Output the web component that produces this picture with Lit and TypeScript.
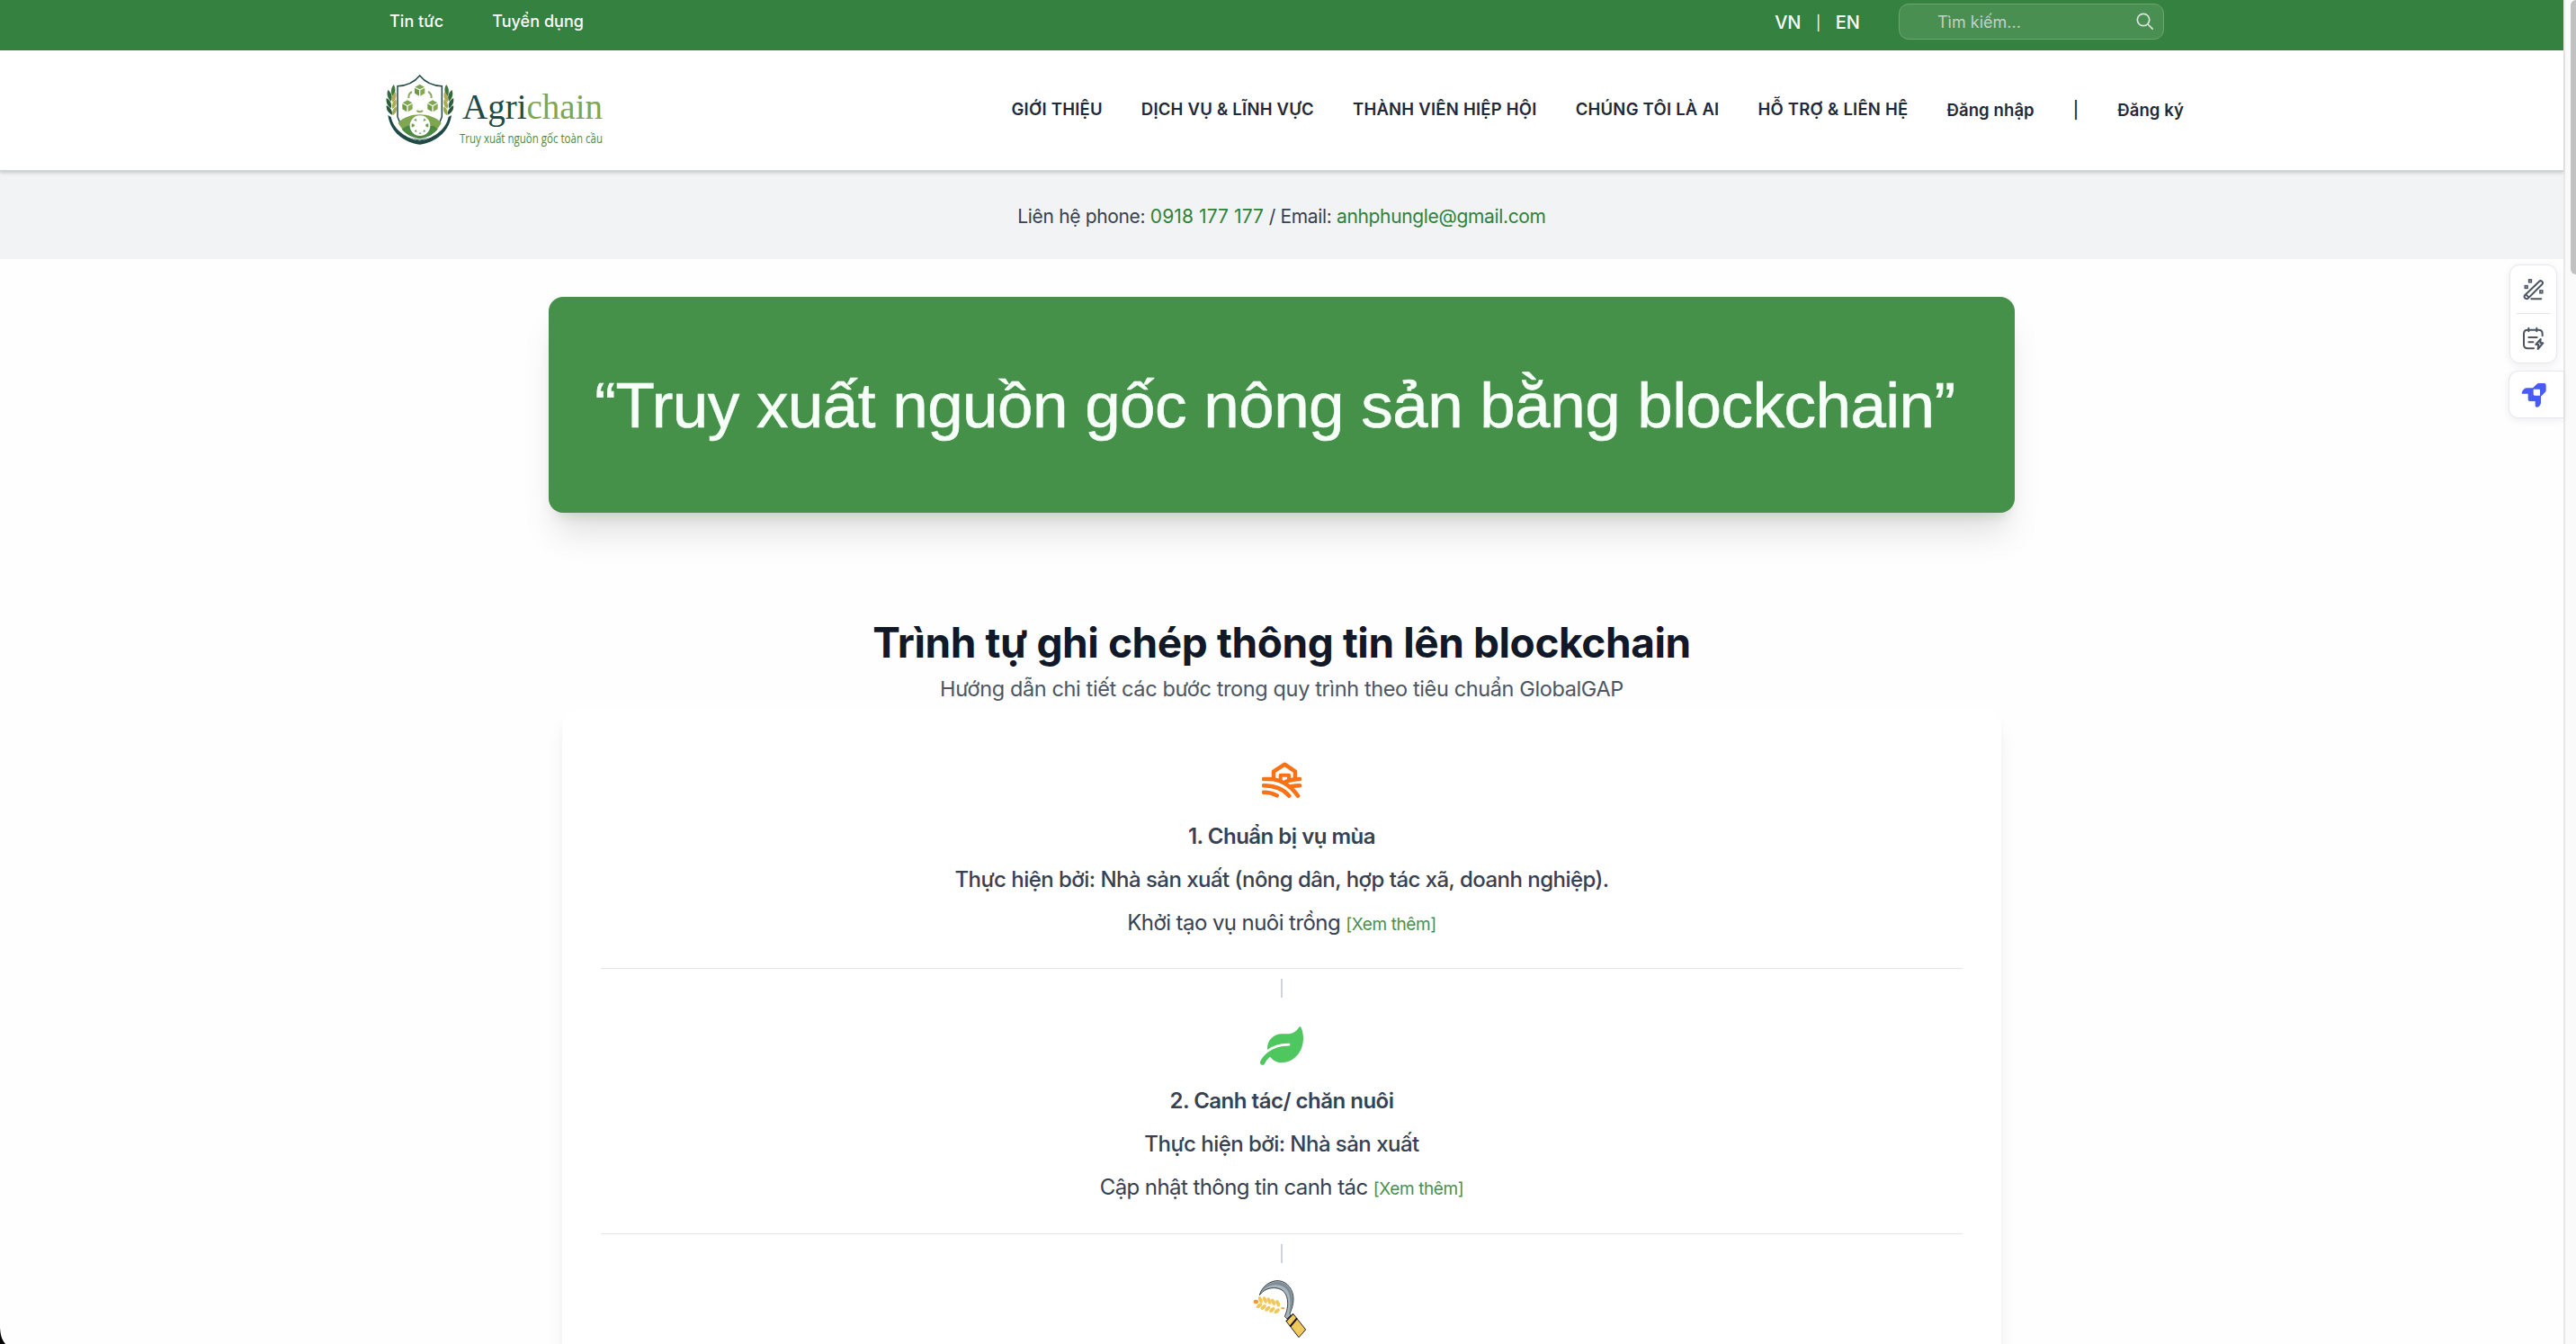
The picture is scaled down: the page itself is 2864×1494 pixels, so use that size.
import { LitElement, html, css, svg, nothing } from "lit";
import { customElement, property } from "lit/decorators.js";

const farmIcon = svg`<svg width="44" height="40" viewBox="189 82 132 120" fill="none" stroke="#f97316" stroke-width="13.5" stroke-linecap="round" stroke-linejoin="round">
  <path d="M228 137V114L265 90L300 114V137"/>
  <path d="M251 142V126H279V138" stroke-width="12"/>
  <path d="M195 139H212C256 139 286 163 309 195"/>
  <path d="M315 139C297 139 282 142 268 148"/>
  <path d="M195 161C238 161 262 174 280 195"/>
  <path d="M315 161C304 161 294 162 284 164"/>
  <path d="M195 183C213 183 227 187 239 194"/>
</svg>`;

const leafIcon = svg`<svg width="48" height="43" viewBox="0 0 576 512" fill="#4fc75f">
  <path d="M546.2 9.7c-5.6-12.5-21.6-13-28.3-1.2C486.9 62.4 431.4 96 368 96h-80C182 96 96 182 96 288c0 7 .8 13.7 1.5 20.5C161.3 262.8 253.4 224 384 224c8.800 0 16 7.200 16 16s-7.200 16-16 16C132.600 256 26 410.100 2.400 468c-6.600 16.300 1.200 34.900 17.500 41.600 16.400 6.800 35-1.100 41.800-17.300 1.500-3.600 20.900-47.900 71.900-90.600 32.400 43.900 94 85.800 174.900 77.200C465.500 467.500 576 326.700 576 154.300c0-50.200-10.800-102.200-29.800-144.600z"/>
</svg>`;

const grainPairs = [
  [185, 1090, 181, 1110], [200, 1091, 195, 1115], [214, 1094, 209, 1120],
  [228, 1098, 224, 1124], [243, 1102, 240, 1128],
];

const sickleIcon = svg`<svg class="sickle" width="60" height="66" viewBox="160 1022 180 198">
  <path d="M182 1075C190 1045 220 1025 246 1027C276 1030 295 1058 295 1088C295 1108 288 1124 283 1137L286 1142L274 1154L266 1146C274 1128 278 1110 275 1090C271 1062 252 1051 230 1051C208 1051 194 1060 182 1075Z" fill="#a9b4bb" stroke="#3a4148" stroke-width="3"/>
  <path d="M186 1068C196 1044 222 1029 246 1030C273 1033 291 1058 292 1088C292 1106 286 1122 281 1134C285 1112 287 1092 281 1072C274 1048 252 1040 232 1041C212 1042 196 1054 186 1068Z" fill="#7c8d99"/>
  <path d="M294 1137L336 1190L313 1216L271 1162Z" fill="#f1c65a" stroke="#20242a" stroke-width="3"/>
  <path d="M307 1152L284 1180" stroke="#111" stroke-width="6"/>
  <path d="M294 1137L271 1162" stroke="#20242a" stroke-width="4"/>
  <path d="M290 1152L284 1168M318 1178L308 1196" stroke="#fadc8a" stroke-width="2"/>
  <path d="M174 1098C205 1102 235 1110 262 1119" stroke="#f8e6b4" stroke-width="2" fill="none"/>
  <ellipse cx="170" cy="1097" rx="8" ry="7" fill="#f0983c"/>
  <ellipse cx="260" cy="1119" rx="6" ry="3" fill="#ee9a45"/>
  ${grainPairs.map(([a, b, c, d]) => svg`
    <ellipse cx=${a} cy=${b} rx="6" ry="11.500" transform="rotate(-25 ${a} ${b})" fill="#f1c65a"/>
    <ellipse cx=${c} cy=${d} rx="6" ry="11" transform="rotate(48 ${c} ${d})" fill="#f1c65a"/>`)}
</svg>`;

const cube = (x: number, y: number) => svg`<g transform="translate(${x} ${y})">
  <path d="M0 -20L16 -11L0 -3L-16 -11Z" fill="#7fa650"/>
  <path d="M-17 -8L-2 0V19L-17 10Z" fill="#6f9b45"/>
  <path d="M17 -8L2 0V19L17 10Z" fill="#87a954"/>
</g>`;

const leftLaurel = svg`<g>
  <path d="M53 58C62 72 59 87 49 97C42 83 44 69 53 58Z" fill="#3f7a3c"/>
  <path d="M34 76C47 86 50 101 44 114C32 103 29 90 34 76Z" fill="#36693a"/>
  <path d="M29 103C43 111 48 124 44 137C31 128 27 116 29 103Z" fill="#2c5f39"/>
  <path d="M29 128C42 134 49 145 48 159C34 152 28 142 29 128Z" fill="#27573b"/>
  <path d="M59 83C65 98 59 111 48 117C45 103 49 91 59 83Z" fill="#b3a84e"/>
  <path d="M60 107C65 121 60 133 49 139C45 126 49 115 60 107Z" fill="#a8ab4e"/>
  <path d="M61 131C65 144 61 154 50 161C46 148 51 138 61 131Z" fill="#9aa94f"/>
</g>`;

const logo = svg`<svg class="logo" width="250" height="96" viewBox="18 16 750 288">
  ${leftLaurel}
  <g transform="translate(281.500 0) scale(-1 1)">${leftLaurel}</g>
  <path d="M140 28C124 48 98 62 66 63V165C82 210 110 236 140 244C170 236 198 210 214 165V63C182 62 156 48 140 28Z" fill="#fff" stroke="#1f4a46" stroke-width="4.500"/>
  <path d="M68 186C100 148 180 148 212 186C198 214 170 232 140 240C110 232 82 214 68 186Z" fill="#7fa650"/>
  <path d="M80 207C110 180 150 196 166 232L140 240C112 232 92 222 80 207Z" fill="#4d8a42"/>
  <path d="M200 207C180 184 160 196 140 240C166 232 188 222 200 207Z" fill="#4d8a42"/>
  <path d="M34 160C42 218 90 252 140 258C190 252 238 218 246 160L236 166C226 212 182 238 140 246C98 238 54 212 44 166Z" fill="#1f4a46"/>
  <path d="M50 160C60 208 100 234 140 241C180 234 220 208 230 160" fill="none" stroke="#fff" stroke-width="3.500"/>
  ${cube(140, 77)}${cube(99, 130)}${cube(183, 130)}
  <path d="M103 103C102 92 106 86 114 82M179 103C180 92 176 86 168 82M130 145Q140 153 150 145" fill="none" stroke="#88ab58" stroke-width="6"/>
  <circle cx="141" cy="195" r="34" fill="#fff"/>
  <path d="M120 176L130 181L128 171ZM162 176L152 181L154 171ZM113 188L121 190L123 195L119 200L113 200ZM169 188L161 190L159 195L163 200L169 200ZM122 214L129 208L130 217ZM160 214L153 208L152 217ZM136 222L141 217L146 222Z" fill="#6ba055"/>
  <text x="282" y="172" font-family="Liberation Serif, serif" font-size="119" textLength="468" lengthAdjust="spacingAndGlyphs" fill="#1f4a46">Agri<tspan fill="#7fa650">chain</tspan></text>
  <text x="273" y="252" font-family="Open Sans, sans-serif" font-size="45" textLength="477" lengthAdjust="spacingAndGlyphs" fill="#4d8a42">Truy xuất nguồn gốc toàn cầu</text>
</svg>`;

const searchIcon = svg`<svg class="glass" width="20" height="20" viewBox="0 0 20 20" fill="none" stroke="#dbe6dc" stroke-width="1.700" stroke-linecap="round">
  <circle cx="8" cy="8" r="6.700"/><path d="M13 13L18.200 18.200"/></svg>`;

const wandIcon = svg`<svg width="24" height="26" viewBox="424 926 72 78" fill="none" stroke="#4b5563" stroke-width="6" stroke-linecap="round">
  <path d="M431 983L478 938A6.500 6.500 0 0 1 488 947L442 993A7 7 0 0 1 431 983ZM434 981L443 990"/>
  <path d="M452 996H485"/>
  <g stroke-width="5" stroke-linecap="butt"><rect x="444" y="932" width="8" height="8"/><rect x="431" y="952" width="8" height="8"/><rect x="481" y="968" width="8" height="8"/></g>
</svg>`;

const noteIcon = svg`<svg width="25" height="27" viewBox="425 1088 75 81" fill="none" stroke="#4b5563" stroke-width="6" stroke-linecap="round" stroke-linejoin="round">
  <path d="M464 1161H444Q431 1161 431 1148V1112Q431 1099 444 1099H480Q493 1099 493 1112V1119"/>
  <path d="M447 1093V1104M474 1093V1104M447 1124H475M447 1140H462"/>
  <path d="M487 1130L471 1148H480L478 1163L495 1143H486Z"/>
</svg>`;

const rocketIcon = svg`<svg width="28" height="28" viewBox="415 1275 84 84" fill="#4a5af7" fill-rule="evenodd">
  <path d="M417 1310C420 1300 427 1294 434 1294H454L468 1280Q470 1278 474 1278H492Q498 1278 498 1284V1302Q498 1306 495 1308L481 1322V1343C480 1350 475 1357 468 1358Q462 1358 462 1352V1338H444Q438 1338 438 1332V1313H420Q417 1313 417 1310ZM456 1298V1315Q456 1319 460 1319H478V1301Q478 1298 475 1298Z"/>
</svg>`;

interface Step { icon: unknown; title: string; actor: string; note: string }

const steps: Step[] = [
  { icon: farmIcon, title: "1. Chuẩn bị vụ mùa", actor: "Thực hiện bởi: Nhà sản xuất (nông dân, hợp tác xã, doanh nghiệp).", note: "Khởi tạo vụ nuôi trồng" },
  { icon: leafIcon, title: "2. Canh tác/ chăn nuôi", actor: "Thực hiện bởi: Nhà sản xuất", note: "Cập nhật thông tin canh tác" },
  { icon: sickleIcon, title: "", actor: "", note: "" },
];

@customElement("process-step")
class ProcessStep extends LitElement {
  @property({ attribute: false }) step!: Step;
  @property({ type: Boolean }) first = false;

  static styles = css`
    :host { display: block; }
    .step { display: flex; flex-direction: column; align-items: center; color: #374151; font-size: 24px; line-height: 48px; white-space: nowrap; }
    .stem { width: 2px; height: 21px; background: #d1d5db; margin: 11px 0 25px; }
    .icon { height: 56px; display: flex; align-items: center; justify-content: center; margin-bottom: 10px; }
    .top { margin-top: 49px; margin-bottom: 11px; }
    .icon svg { display: block; flex: none; }
    .icon .sickle { margin: 0 4px 4px 0; }
    .title { font-weight: 600; letter-spacing: -0.5px; }
    .actor { font-weight: 500; letter-spacing: -0.53px; }
    .note { letter-spacing: -0.57px; height: 48px; }
    .more { color: #4a8f4d; font-size: 19px; line-height: 1; letter-spacing: -0.4px; }
    .rule { align-self: stretch; height: 1px; background: #e3e5e8; margin-top: 27px; }
    .top ~ .rule { margin-top: 26px; }
  `;

  render() {
    const s = this.step;
    return html`<div class="step">
      ${this.first ? nothing : html`<div class="stem"></div>`}
      <div class="icon ${this.first ? "top" : ""}">${s.icon}</div>
      ${s.title ? html`
        <div class="title">${s.title}</div>
        <div class="actor">${s.actor}</div>
        <div class="note">${s.note} <span class="more">[Xem thêm]</span></div>
        <div class="rule"></div>` : nothing}
    </div>`;
  }
}

@customElement("app-root")
class AppRoot extends LitElement {
  static styles = css`
    :host { display: block; font-family: Inter, "Noto Sans", sans-serif; }
    * { box-sizing: border-box; }
    .window { display: flex; height: 1494px; overflow: hidden; position: relative; background: #fefefe; }
    .page { flex: 1; min-width: 0; white-space: nowrap; }
    .track { width: 14px; border-left: 2px solid #e8e8e8; background: #fafafa; display: flex; justify-content: flex-end; align-items: flex-start; }
    .thumb { width: 6px; height: 305px; background: #c1c1c1; border-radius: 6px 0 0 6px; }
    .topbar { height: 56px; background: #35813f; color: #fff; display: flex; justify-content: space-between; padding: 0 444px 0 433px; }
    .links { display: flex; gap: 54px; font-size: 18px; letter-spacing: 0.05px; line-height: 48px; font-weight: 500; }
    .tools { display: flex; align-items: flex-start; font-size: 20px; line-height: 50px; font-weight: 500; }
    .lang { display: flex; gap: 16.500px; margin-right: 43px; }
    .bar { font-weight: 400; font-size: 16px; line-height: 51px; }
    .search { width: 295px; height: 40px; margin-top: 4px; border: 1px solid #6ba571; background: #4a8f52; border-radius: 11px; display: flex; align-items: center; padding: 0 10px 0 42px; }
    .search input { flex: 1; min-width: 0; border: 0; padding: 0; background: none; outline: none; font: 400 18px Inter, sans-serif; color: #fff; }
    .search input::placeholder { color: #c3d0c9; opacity: 1; }
    .nav { height: 135px; background: #fff; border-bottom: 2px solid #d1d5db; box-shadow: 0 2px 3px rgba(0,0,0,.13); position: relative; display: flex; justify-content: space-between; align-items: flex-start; padding: 24px 422px 0 426px; }
    .menu { display: flex; gap: 43px; font-size: 18.500px; letter-spacing: 0.23px; line-height: 26px; font-weight: 600; color: #1f2937; padding-top: 28px; }
    .auth { display: flex; gap: 43px; padding-top: 1px; letter-spacing: 0.1px; }
    .pipe { font-weight: 500; }
    .contact { height: 97px; background: #f2f3f5; display: flex; align-items: center; justify-content: center; font-size: 21px; letter-spacing: -0.34px; color: #374151; white-space: pre; padding-top: 2px; }
    .contact a { color: #2f8239; }
    .contact .phone { letter-spacing: 0.1px; }
    .main { display: flex; flex-direction: column; align-items: center; padding-top: 42px; }
    .banner { width: 1630px; height: 240px; border-radius: 16px; background: #469149; box-shadow: 0 30px 38px -8px rgba(0,0,0,.12), 0 12px 15px -9px rgba(0,0,0,.12); display: flex; align-items: center; justify-content: center; padding-right: 15px; font: 71px "Liberation Sans", Arial, sans-serif; letter-spacing: -0.53px; -webkit-text-stroke: 0.6px #f7fff9; color: #f7fff9; }
    h1 { margin: 114px 0 0; font-size: 46px; line-height: 60px; letter-spacing: -0.4px; font-weight: 700; color: #111827; }
    .sub { font-size: 23.500px; letter-spacing: -0.38px; line-height: 44px; color: #4b5563; }
    .card { width: 1600px; height: 760px; margin-top: 2px; border-radius: 16px; background: #fff; padding: 0 43px; box-shadow: 0 15px 22px -4px rgba(0,0,0,.09), 0 4px 8px -3px rgba(0,0,0,.05); }
    .float { position: absolute; right: 14px; top: 294px; display: flex; flex-direction: column; gap: 8px; align-items: flex-end; }
    .box { background: #fff; border: 1px solid #e6e8f0; box-shadow: 0 2px 8px rgba(40,30,60,.08); display: flex; flex-direction: column; align-items: center; }
    .duo { width: 53px; height: 110px; border-radius: 11px; margin-right: 7px; padding-top: 14px; }
    .duo hr { width: 37px; height: 1px; border: 0; margin: 13px 0 14px; background: #e3e5ee; flex: none; }
    .duo svg { flex: none; }
    .solo { width: 61px; height: 53px; border-radius: 11px 0 0 11px; border-right: 0; padding: 12px 7px 0 0; }
    .corner { position: absolute; left: 0; bottom: 0; }
    svg { display: block; }
    .logo { overflow: visible; }
  `;

  render() {
    return html`<div class="window">
      <div class="page">
        <div class="topbar">
          <div class="links"><span>Tin tức</span><span>Tuyển dụng</span></div>
          <div class="tools">
            <div class="lang"><span>VN</span><span class="bar">|</span><span>EN</span></div>
            <div class="search"><input placeholder="Tìm kiếm..." />${searchIcon}</div>
          </div>
        </div>
        <div class="nav">
          ${logo}
          <div class="menu">
            <span>GIỚI THIỆU</span><span>DỊCH VỤ &amp; LĨNH VỰC</span><span>THÀNH VIÊN HIỆP HỘI</span><span>CHÚNG TÔI LÀ AI</span><span>HỖ TRỢ &amp; LIÊN HỆ</span>
            <div class="auth"><span>Đăng nhập</span><span class="pipe">|</span><span>Đăng ký</span></div>
          </div>
        </div>
        <div class="contact"><span>Liên hệ phone: <a class="phone">0918 177 177</a> / Email: <a>anhphungle@gmail.com</a></span></div>
        <div class="main">
          <div class="banner"><span>“Truy xuất nguồn gốc nông sản bằng blockchain”</span></div>
          <h1>Trình tự ghi chép thông tin lên blockchain</h1>
          <div class="sub">Hướng dẫn chi tiết các bước trong quy trình theo tiêu chuẩn GlobalGAP</div>
          <div class="card">
            ${steps.map((s, i) => html`<process-step .step=${s} ?first=${i === 0}></process-step>`)}
          </div>
        </div>
      </div>
      <div class="track"><div class="thumb"></div></div>
      <div class="float">
        <div class="box duo">${wandIcon}<hr />${noteIcon}</div>
        <div class="box solo">${rocketIcon}</div>
      </div>
      <svg class="corner" width="6" height="18" viewBox="0 0 6 18"><path d="M0 0C.5 8 2 13 6 18H0Z" fill="#000"/></svg>
    </div>`;
  }
}
